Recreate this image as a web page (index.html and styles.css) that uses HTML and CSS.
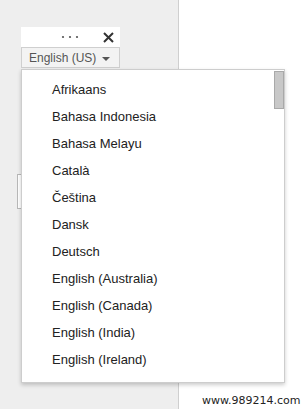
FILE: index.html
```html
<!DOCTYPE html>
<html lang="en">
<head>
    <meta charset="UTF-8">
    <meta name="viewport" content="width=device-width, initial-scale=1.0">
    <title>Language picker</title>
    <link rel="stylesheet" href="styles.css">
</head>
<body>
    <div class="page">
        <aside class="sidebar">
            <div class="widget">
                <div class="toolbar">
                    <svg class="dots" width="18" height="4" viewBox="0 0 18 4">
                        <circle cx="2" cy="2" r="1.1"/>
                        <circle cx="9" cy="2" r="1.1"/>
                        <circle cx="16" cy="2" r="1.1"/>
                    </svg>
                    <svg class="close" width="11" height="11" viewBox="0 0 11 11">
                        <path d="M1 1 L10 10 M10 1 L1 10"/>
                    </svg>
                </div>
                <div class="lang-select">
                    <span>English (US)</span>
                    <span class="arrow"></span>
                </div>
                <div class="menu">
                    <ul class="menu-list">
                        <li>Afrikaans</li>
                        <li>Bahasa Indonesia</li>
                        <li>Bahasa Melayu</li>
                        <li>Català</li>
                        <li>Čeština</li>
                        <li>Dansk</li>
                        <li>Deutsch</li>
                        <li>English (Australia)</li>
                        <li>English (Canada)</li>
                        <li>English (India)</li>
                        <li>English (Ireland)</li>
                        <li>English (New Zealand)</li>
                        <li>English (Philippines)</li>
                    </ul>
                    <div class="scroll-thumb"></div>
                </div>
            </div>
            <div class="stub"></div>
        </aside>
        <main class="content">
            <span class="watermark">www.989214.com</span>
        </main>
    </div>
</body>
</html>
```

FILE: styles.css
```css
html, body {
    margin: 0;
    height: 100%;
}
body {
    font-family: "Liberation Sans", Arial, sans-serif;
    background-color: #eeeeee;
}
.page {
    display: grid;
    grid-template-columns: 178px 1fr;
    height: 100%;
}
.sidebar {
    padding-top: 27px;
}
.widget {
    position: relative;
    width: 99px;
    margin-left: 21px;
}
.toolbar {
    height: 20px;
    background-color: #fff;
    display: flex;
    align-items: center;
    justify-content: flex-end;
    gap: 24px;
    padding-right: 6px;
}
.dots {
    fill: #555;
}
.close {
    stroke: #333;
    stroke-width: 2;
}
.lang-select {
    height: 19px;
    border: 1px solid #cfcfcf;
    background-color: #f3f3f3;
    display: flex;
    align-items: center;
    justify-content: space-between;
    padding: 0 9px 0 7px;
    font-size: 12px;
    color: #555;
}
.arrow {
    width: 0;
    height: 0;
    border-left: 4px solid transparent;
    border-right: 4px solid transparent;
    border-top: 4px solid #555;
    margin-top: 2px;
}
.menu {
    position: absolute;
    top: 42px;
    left: 0;
    width: 262px;
    height: 312px;
    background-color: #fff;
    border: 1px solid #cdcdcd;
    box-shadow: 0 2px 4px rgba(0, 0, 0, 0.2);
    overflow: hidden;
    z-index: 2;
}
.menu-list {
    list-style: none;
    margin: 0;
    padding: 6px 0 0 30px;
}
.menu-list li {
    height: 27px;
    line-height: 27px;
    font-size: 13px;
    color: #222;
}
.scroll-thumb {
    position: absolute;
    top: 1px;
    right: 0;
    width: 8px;
    height: 36px;
    background-color: #c8c8c8;
    border: 1px solid #a9a9a9;
}
.stub {
    width: 100px;
    height: 33px;
    margin: 106px 0 0 17px;
    background-color: #fff;
    border: 1px solid #b8b8b8;
}
.content {
    background-color: #fff;
    border-left: 1px solid #cfcfcf;
    display: flex;
    align-items: flex-end;
    padding-left: 23px;
    padding-bottom: 1px;
}
.watermark {
    font-family: "DejaVu Sans", Tahoma, sans-serif;
    font-size: 11px;
    line-height: 14px;
    color: #222;
}
```
